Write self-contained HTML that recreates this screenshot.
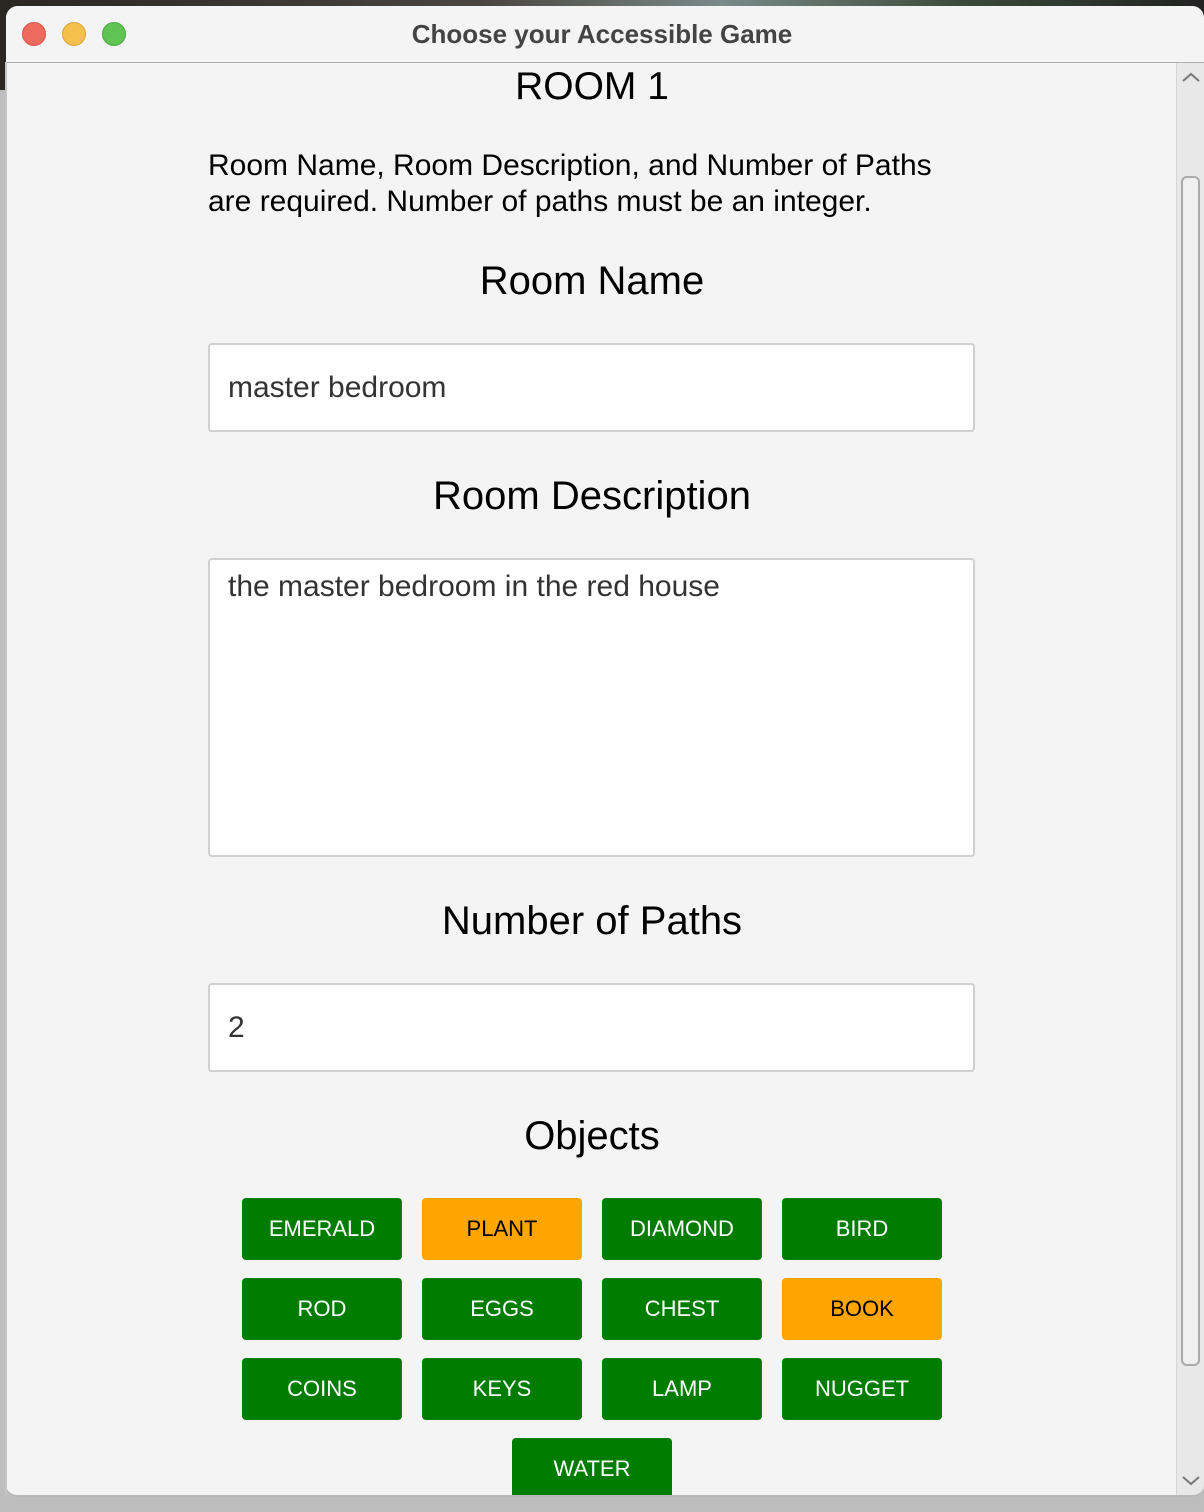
<!DOCTYPE html>
<html><head><meta charset="utf-8"><style>
*{box-sizing:border-box;margin:0;padding:0}
body{width:1204px;height:1512px;background:#bdbdbd;position:relative;overflow:hidden;font-family:"Liberation Sans",Arial,sans-serif}
.bgtop{position:absolute;left:0;top:0;width:1204px;height:90px;background:linear-gradient(90deg,#2a2622,#4a4540 40%,#7a8a88 60%,#3a4a3a 80%,#222 100%)}
.win{position:absolute;left:6px;top:6px;width:1198px;height:1491px;background:#f4f4f4;border-radius:12px;overflow:hidden;border-bottom:2px solid #b8b8b8}
.edge{position:absolute;left:5px;top:62px;width:2px;height:1435px;background:#c4c4c4}
.tb{position:absolute;left:0;top:0;width:100%;height:57px;background:#f4f4f4;border-bottom:1px solid #b0b0b0}
.dot{position:absolute;top:16px;width:24px;height:24px;border-radius:50%}
.title{position:absolute;left:0;width:1192px;top:13px;text-align:center;font-weight:bold;font-size:26px;color:#444}
.abs{position:absolute}
.h{position:absolute;left:0;width:1172px;text-align:center;color:#000}
.field{position:absolute;left:202px;width:767px;background:#fff;border:2px solid #d0d0d0;border-radius:4px;font-size:30px;color:#333;padding-left:18px}
.btn{position:absolute;width:160px;height:62px;border-radius:4px;background:#007c00;color:#fff;font-size:22px;text-align:center;line-height:62px}
.o{background:#ffa500;color:#000}
.sb{position:absolute;left:1170px;top:57px;width:28px;height:1434px;background:#e8e8e8;border-left:1px solid #d6d6d6}
.thumb{position:absolute;left:4px;top:113px;width:19px;height:1190px;border:2px solid #aaa;border-radius:6px;background:#f0f0f0}
</style></head><body>
<div class="bgtop"></div>
<div class="win">
<div class="tb">
<div class="dot" style="left:16px;background:#ee6a5e;border:1px solid #d85348"></div>
<div class="dot" style="left:56px;background:#f6c04f;border:1px solid #dea33a"></div>
<div class="dot" style="left:96px;background:#5fc454;border:1px solid #4aa83f"></div>
<div class="title">Choose your Accessible Game</div>
</div>
<div class="h" style="top:59px;font-size:39px">ROOM 1</div>
<div class="abs" style="left:202px;top:142px;font-size:30px;line-height:36px;color:#000">Room Name, Room Description, and Number of Paths<br>are required. Number of paths must be an integer.</div>
<div class="h" style="top:253px;font-size:40px">Room Name</div>
<div class="field" style="top:337px;height:89px;line-height:85px">master bedroom</div>
<div class="h" style="top:468px;font-size:40px">Room Description</div>
<div class="field" style="top:552px;height:299px;padding-top:10px;line-height:34px">the master bedroom in the red house</div>
<div class="h" style="top:893px;font-size:40px">Number of Paths</div>
<div class="field" style="top:977px;height:89px;line-height:85px">2</div>
<div class="h" style="top:1108px;font-size:40px">Objects</div>
<div class="btn" style="left:236px;top:1192px">EMERALD</div>
<div class="btn o" style="left:416px;top:1192px">PLANT</div>
<div class="btn" style="left:596px;top:1192px">DIAMOND</div>
<div class="btn" style="left:776px;top:1192px">BIRD</div>
<div class="btn" style="left:236px;top:1272px">ROD</div>
<div class="btn" style="left:416px;top:1272px">EGGS</div>
<div class="btn" style="left:596px;top:1272px">CHEST</div>
<div class="btn o" style="left:776px;top:1272px">BOOK</div>
<div class="btn" style="left:236px;top:1352px">COINS</div>
<div class="btn" style="left:416px;top:1352px">KEYS</div>
<div class="btn" style="left:596px;top:1352px">LAMP</div>
<div class="btn" style="left:776px;top:1352px">NUGGET</div>
<div class="btn" style="left:506px;top:1432px">WATER</div>
<div class="sb">
<svg class="abs" style="left:4px;top:8px" width="20" height="12"><path d="M2 10 L10 3 L18 10" stroke="#777" stroke-width="2" fill="none"/></svg>
<div class="thumb"></div>
<svg class="abs" style="left:4px;top:1412px" width="20" height="12"><path d="M2 2 L10 9 L18 2" stroke="#777" stroke-width="2" fill="none"/></svg>
</div>
</div>
<div class="edge"></div>
</body></html>
